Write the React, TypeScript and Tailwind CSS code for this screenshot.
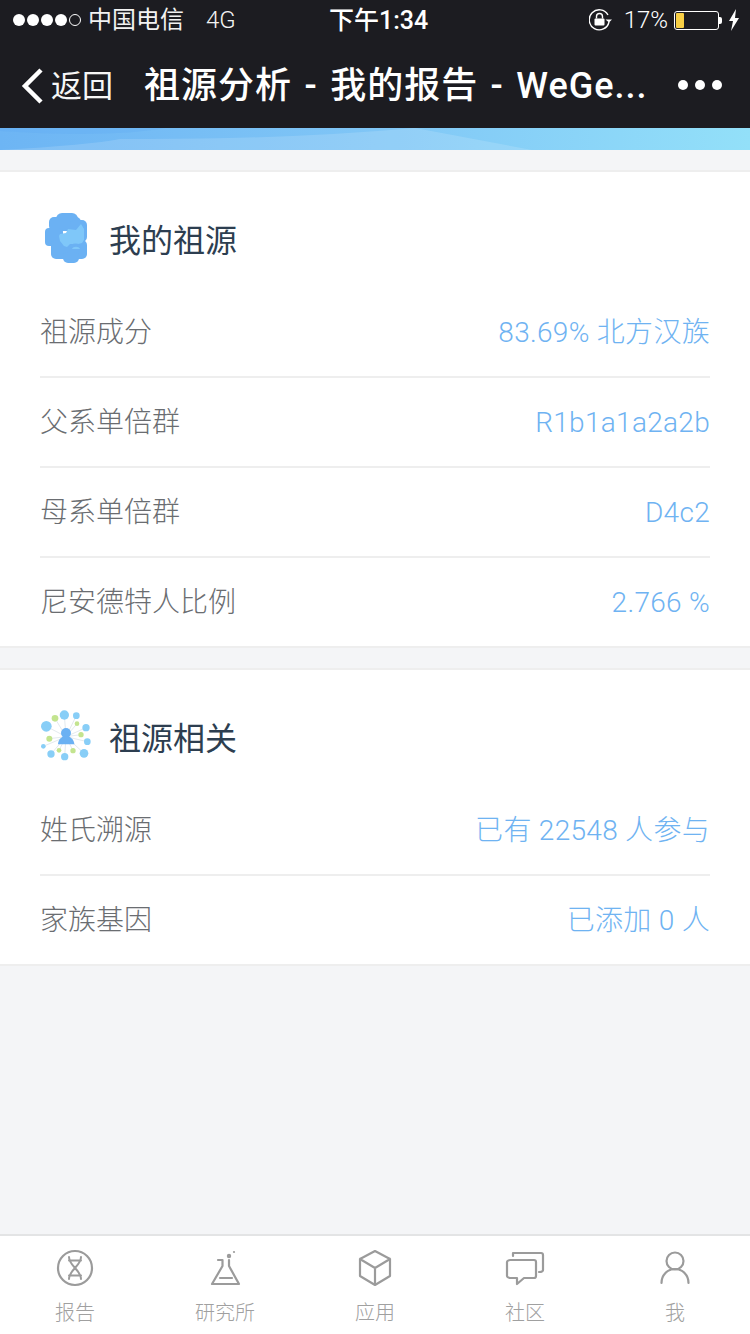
function Row({ label, value, last }: { label: string; value: string; last?: boolean }) {
  return (
    <div className={`flex items-center justify-between mx-10 pt-[2px] font-light ${last ? "h-[88px]" : "h-[90px] border-b-2 border-[#eeeeee]"}`}>
      <span className="text-[28px] text-[#6a6d71]">{label}</span>
      <span className="text-[28px] tracking-[0.3px] text-[#6fb3f2]">{value}</span>
    </div>
  );
}

function HeadIcon() {
  return (
    <svg width="80" height="70" viewBox="0 0 80 70" className="shrink-0 mb-[12px]">
      <g fill="#6bb1f3">
        <rect x="26" y="13" width="22" height="14" rx="6" />
        <rect x="19" y="17" width="32" height="14" rx="5" />
        <rect x="15" y="28" width="18" height="18" rx="4" />
        <rect x="40" y="20" width="17" height="22" rx="5" />
        <rect x="21" y="40" width="36" height="19" rx="5" />
        <rect x="33" y="52" width="16" height="11" rx="5" />
      </g>
      <path fill="#7fc7f9" d="M51 24l3 5v11l-2 3-4 1h-8l-3 3-3-1-4-5-1-5 1-2 6-1 2-4 8 1z" />
      <path fill="none" stroke="#6bb1f3" strokeWidth="1.500" d="M41 48c0-5 9-5 9 0" />
      <path fill="#7fc7f9" d="M42 49c1-3 7-3 8 0z" />
    </svg>
  );
}

function NetIcon() {
  const blue: [number, number, number][] = [
    [103, 45, 14], [139, 47, 10], [168, 83, 11], [172, 125, 10], [162, 160, 13], [104, 170, 11], [63, 162, 11], [40, 139, 7], [49, 79, 16],
  ];
  const green: [number, number, number][] = [
    [75, 55, 10], [141, 71, 7], [153, 104, 8], [129, 152, 8], [87, 151, 7], [58, 116, 9],
  ];
  return (
    <svg width="75" height="70" viewBox="0 0 225 210" className="shrink-0 mb-[8px]">
      {[...blue, ...green].map(([x, y], i) => (
        <line key={i} x1="108" y1="110" x2={x} y2={y} stroke="#e4eaee" strokeWidth="3" />
      ))}
      {blue.map(([x, y, r], i) => (
        <circle key={i} cx={x} cy={y} r={r} fill="#88cef7" />
      ))}
      {green.map(([x, y, r], i) => (
        <circle key={i} cx={x} cy={y} r={r} fill="#c3e48f" />
      ))}
      <circle cx="108" cy="99" r="15" fill="#6bb1f3" />
      <path fill="#6bb1f3" d="M84 133c0-12 8-21 15-23h18c7 2 16 11 16 23z" />
    </svg>
  );
}

function Tab({ label, children }: { label: string; children: React.ReactNode }) {
  return (
    <div className="flex-1 flex flex-col items-center pt-[12px]">
      <svg width="40" height="40" viewBox="0 0 40 40" fill="none" stroke="#9b9b9b" strokeWidth="2.2" strokeLinejoin="round" strokeLinecap="round">
        {children}
      </svg>
      <span className="mt-[13px] text-[20px] leading-[24px] font-light text-[#a0a0a0]">{label}</span>
    </div>
  );
}

export default function App() {
  return (
    <div className="w-[750px] h-[1334px] bg-[#f4f5f7] flex flex-col overflow-hidden font-['Roboto','Noto_Sans_CJK_SC',sans-serif]">
      <div className="bg-[#1c1c21] text-white h-[128px] shrink-0 flex flex-col">
        <div className="h-[40px] flex items-center justify-between pl-[13px] pr-[10px] relative">
          <div className="flex items-center">
            <div className="flex gap-[2px]">
              {[0, 1, 2, 3].map((i) => (
                <span key={i} className="w-[12px] h-[12px] rounded-full bg-white" />
              ))}
              <span className="w-[12px] h-[12px] rounded-full border border-white" />
            </div>
            <span className="ml-[7px] text-[24px] leading-none text-[#f2f2f2]">中国电信</span>
            <span className="ml-[22px] text-[24px] leading-none font-light text-[#f2f2f2]">4G</span>
          </div>
          <span className="absolute left-[329px] top-[6px] text-[25px] leading-[30px] font-medium">下午1:34</span>
          <div className="flex items-center">
            <svg width="24" height="22" viewBox="0 0 24 22" fill="none" className="mr-[11px]">
              <path d="M19 6A10 10 0 1 0 20 13" stroke="#fff" strokeWidth="1.4" />
              <path d="M16.5 10.5h6.500l-3 3z" fill="#fff" />
              <rect x="5.500" y="9.500" width="10" height="7" rx="1" fill="#fff" />
              <path d="M7.500 9.500V7.500a3 3 0 0 1 6 0v2" stroke="#fff" strokeWidth="1.400" />
            </svg>
            <span className="text-[24px] leading-none font-light">17%</span>
            <div className="ml-[6px] w-[45px] h-[19px] border border-white rounded-[3px] p-[1px]">
              <div className="w-[8px] h-full bg-[#f8cf45] rounded-[1px]" />
            </div>
            <span className="w-[3px] h-[7px] bg-white rounded-r-[2px] mr-[6px]" />
            <svg width="12" height="22" viewBox="0 0 12 22">
              <path fill="#fff" d="M8 0 1 12h4l-2 10 8-13H7z" />
            </svg>
          </div>
        </div>
        <div className="flex-1 flex items-center relative pt-[4px]">
          <svg width="24" height="36" viewBox="0 0 24 36" fill="none" className="ml-[21px]" stroke="#fff" strokeWidth="4.500">
            <path d="M20 2 4 18l16 16" />
          </svg>
          <span className="ml-[6px] text-[31px] leading-none text-[#f6f6f6]">返回</span>
          <span className="ml-[31px] w-[510px] text-[36px] leading-none font-medium tracking-[1px] [word-spacing:2.5px] whitespace-nowrap">祖源分析 - 我的报告 - WeGe...</span>
          <div className="absolute right-[28px] top-[40px] flex gap-[7px]">
            {[0, 1, 2].map((i) => (
              <span key={i} className="w-[10px] h-[10px] rounded-full bg-white" />
            ))}
          </div>
        </div>
      </div>

      <div className="h-[22px] shrink-0 bg-gradient-to-r from-[#6db5f4] via-[#80c6f6] to-[#93e0f9] relative overflow-hidden">
        <svg width="750" height="22" viewBox="0 0 750 22" className="absolute inset-0">
          <path d="M0 3Q110 10 165 0L0 0z" fill="#5aa8f2" opacity=".25" />
          <path d="M0 22Q90 17 120 11Q280 12 415 0L532 22z" fill="#fff" opacity=".14" />
        </svg>
      </div>

      <div className="mt-[20px] bg-white border-y-2 border-[#eeeeee] shrink-0">
        <div className="h-[116px] flex items-center pl-[30px] pt-[22px]">
          <HeadIcon />
          <span className="-ml-[1px] text-[32px] text-[#2d3e50]">我的祖源</span>
        </div>
        <Row label="祖源成分" value="83.69% 北方汉族" />
        <Row label="父系单倍群" value="R1b1a1a2a2b" />
        <Row label="母系单倍群" value="D4c2" />
        <Row label="尼安德特人比例" value="2.766 %" last />
      </div>

      <div className="mt-[20px] bg-white border-y-2 border-[#eeeeee] shrink-0">
        <div className="h-[116px] flex items-center pl-[30px] pt-[22px]">
          <NetIcon />
          <span className="ml-[4px] text-[32px] text-[#2d3e50]">祖源相关</span>
        </div>
        <Row label="姓氏溯源" value="已有 22548 人参与" />
        <Row label="家族基因" value="已添加 0 人" last />
      </div>

      <div className="mt-auto h-[100px] shrink-0 bg-white border-t-2 border-[#e3e4e5] flex">
        <Tab label="报告">
          <circle cx="20" cy="20" r="17" />
          <path d="M14 9c0 9 12 13 12 22M26 9c0 9-12 13-12 22M14 12.500h12M14 27.500h12" strokeWidth="2" />
        </Tab>
        <Tab label="研究所">
          <path d="M13 12h4.500v6L7 36h27L24 18v-6" />
          <path d="M15 30h12" />
          <circle cx="24" cy="8" r="2.200" fill="#9b9b9b" stroke="none" />
          <circle cx="29" cy="4" r="1.100" fill="#9b9b9b" stroke="none" />
        </Tab>
        <Tab label="应用">
          <path d="M20 3 35 11v17l-15 9-15-9V11zM5 11l15 9 15-9M20 20v17" />
        </Tab>
        <Tab label="社区">
          <path d="M8 8V5h28c1 0 2 1 2 2v15c0 1-1 2-4 2" />
          <path d="M5 12h24c1 0 2 1 2 2v14c0 1-1 2-2 2H19l-7 6v-6H5c-1 0-3-1-3-2V14c0-1 2-2 3-2z" />
        </Tab>
        <Tab label="我">
          <circle cx="20" cy="13" r="8.500" />
          <path d="M6.500 35c0-8 6-14 13.500-14s13.500 6 13.500 14" />
        </Tab>
      </div>
    </div>
  );
}
